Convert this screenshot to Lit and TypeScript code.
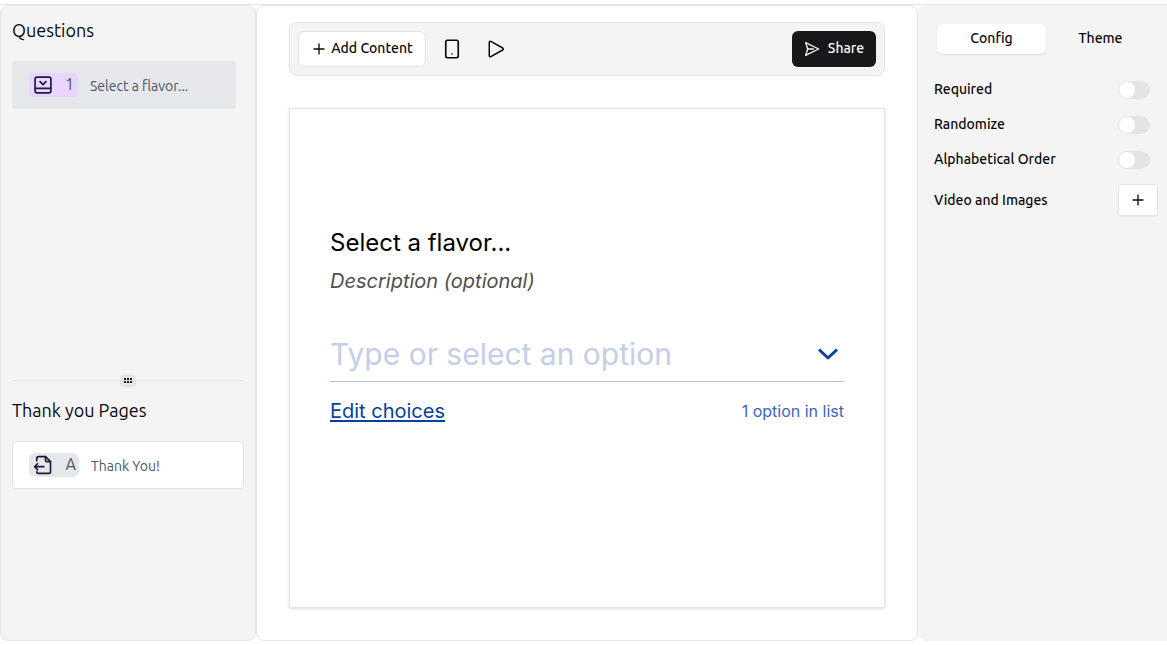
import { LitElement, html, css, svg } from "lit";
import { customElement, state } from "lit/decorators.js";

const icon = (size: number, body: unknown, width = 2) => html`<svg
  width=${size}
  height=${size}
  viewBox="0 0 24 24"
  fill="none"
  stroke="currentColor"
  stroke-width=${width}
  stroke-linecap="round"
  stroke-linejoin="round"
  aria-hidden="true"
>
  ${body}
</svg>`;

const plus = svg`<path d="M4.5 12h15M12 4.5v15" />`;
const phone = svg`<rect x="4.500" y="1.500" width="15" height="21" rx="2" /><path d="M12 18h.01" />`;
const play = svg`<path d="M3 3.200v17.600c0 1.200 1 1.900 2.100 1.300L21 13.300c1-.6 1-2 0-2.600L5.100 1.900C4 1.300 3 2 3 3.200z" />`;
const send = svg`<path d="M2.500 2.500 22 12 2.500 21.500 5.500 12z" /><path d="M5.500 12H14" />`;
const dropdown = svg`<rect x="2.500" y="2.500" width="19" height="19" rx="2.500" /><path d="M2.500 16h19M8.500 8l3.500 3.500L15.500 8" />`;
const exit = svg`<path d="M4.500 7V4a2 2 0 0 1 2-2H15l6 6v12a2 2 0 0 1-2 2H6.500a2 2 0 0 1-2-2" /><path d="M15 2v4.500A1.500 1.500 0 0 0 16.500 8H21" /><path d="M13 14H2M5.500 10.500 2 14l3.500 3.500" />`;

@customElement("app-root")
export class AppRoot extends LitElement {
  static styles = css`
    :host {
      display: flex;
      box-sizing: border-box;
      min-height: 100vh;
      padding: 4px 0;
      background: #fff;
      color: #09090b;
      font-family: Ubuntu, "Noto Sans", sans-serif;
      font-size: 14px;
      line-height: 20px;
    }
    * {
      box-sizing: border-box;
    }
    h1, h2, p {
      margin: 0;
      font-weight: 400;
    }
    button {
      border: 0;
      padding: 0;
      background: none;
      color: inherit;
      font: inherit;
      cursor: pointer;
    }
    svg {
      display: block;
      flex: none;
    }
    .shell {
      flex: 1;
      display: grid;
      grid-template-columns: 256px minmax(0, 1fr) 249px;
      border-top: 1px solid #e4e4e7;
    }
    .pane {
      border: 1px solid #e4e4e4;
      border-radius: 8px;
      min-width: 0;
    }
    .sidebar {
      display: flex;
      flex-direction: column;
      background: #f4f4f4;
      padding: 0 11px;
    }
    .questions {
      flex: 119;
      padding: 10px 8px 0 0;
    }
    .endings {
      flex: 81;
      padding-top: 9px;
    }
    .heading {
      margin-bottom: 17px;
      font-size: 18px;
      line-height: 28px;
      white-space: nowrap;
    }
    .item {
      display: flex;
      align-items: center;
      gap: 12px;
      width: 100%;
      height: 48px;
      padding: 0 16px;
      border: 1px solid transparent;
      border-radius: 4px;
      color: #4b5563;
      background: #e5e7eb;
      text-align: left;
    }
    .item.plain {
      background: #fff;
      border-color: #e4e4e7;
    }
    .name {
      padding-top: 2px;
    }
    .badge {
      display: flex;
      align-items: center;
      justify-content: space-between;
      width: 49px;
      height: 24px;
      padding: 0 4px;
      border-radius: 4px;
      font-size: 16px;
      background: #e9d5ff;
    }
    .badge span {
      padding-bottom: 2px;
    }
    .badge svg {
      color: #1e1b3a;
    }
    .plain .badge {
      width: 50px;
      padding-right: 3px;
      border-radius: 6px;
      background: #e5e7eb;
    }
    .divider {
      display: flex;
      align-items: center;
      height: 12px;
    }
    .divider::before,
    .divider::after {
      content: "";
      flex: 1;
      height: 1px;
      background: #e4e4e4;
    }
    .grip {
      display: grid;
      place-items: center;
      width: 16px;
      height: 12px;
      background: #e4e4e4;
      border-radius: 2px;
    }
    .editor {
      display: flex;
      flex-direction: column;
      gap: 32px;
      padding: 16px 32px 32px;
      background: #fff;
    }
    .toolbar {
      display: flex;
      align-items: center;
      height: 54px;
      padding: 0 8px;
      gap: 16px;
      border: 1px solid #e4e4e4;
      border-radius: 8px;
      background: #f4f4f4;
      font-weight: 500;
    }
    .add,
    .share {
      display: flex;
      align-items: center;
      justify-content: center;
      height: 36px;
      border-radius: 6px;
      white-space: nowrap;
    }
    .add span,
    .share span {
      padding-bottom: 2px;
    }
    .add {
      width: 128px;
      gap: 4px;
      background: #fff;
      border: 1px solid #e4e4e7;
    }
    .tools {
      display: flex;
      gap: 24px;
    }
    .tool {
      display: grid;
      place-items: center;
      width: 20px;
      height: 36px;
    }
    .share {
      width: 84px;
      gap: 8px;
      margin-left: auto;
      background: #18181b;
      color: #fafafa;
    }
    .canvas {
      flex: 1;
      padding: 116px 40px 40px;
      border: 1px solid #e4e4e7;
      box-shadow: 0 1px 3px rgba(0, 0, 0, 0.14);
      font-family: Inter, sans-serif;
    }
    .title {
      font-size: 24px;
      line-height: 36px;
      color: #000;
    }
    .description {
      margin-top: 6px;
      font-size: 20px;
      line-height: 28px;
      font-style: italic;
      color: #505050;
    }
    .field {
      display: flex;
      align-items: center;
      height: 55px;
      margin-top: 32px;
      padding-right: 4px;
      border-bottom: 1px solid #afc0dc;
    }
    .field svg {
      color: #04429c;
    }
    .field input {
      flex: 1;
      min-width: 0;
      height: 44px;
      padding: 0;
      border: 0;
      outline: 0;
      background: none;
      font: 30px/40px Inter, sans-serif;
      color: #0445af;
    }
    .field input::placeholder {
      color: #c3cee8;
      opacity: 1;
    }
    .below {
      display: flex;
      align-items: center;
      justify-content: space-between;
      margin-top: 13px;
      line-height: 32px;
      font-size: 16px;
      color: #3b66bd;
    }
    .below a {
      font-size: 20px;
      color: #04429c;
      text-decoration-thickness: 2px;
      text-underline-offset: 2px;
    }
    .settings {
      padding: 13px 9px 16px 16px;
      border: 0;
      border-radius: 8px 0 0 8px;
      background: #f4f4f4;
      font-weight: 500;
    }
    .tabs {
      display: grid;
      grid-template-columns: 1fr 1fr;
      height: 40px;
      padding: 6px 3px;
      margin-bottom: 21px;
    }
    .tab {
      height: 30px;
      padding-bottom: 2px;
      border-radius: 6px;
    }
    .tab.on {
      background: #fff;
      box-shadow: 0 1px 2px rgba(0, 0, 0, 0.1);
    }
    .row {
      display: flex;
      align-items: center;
      justify-content: space-between;
      margin-bottom: 14px;
    }
    .row label,
    .row span {
      padding-bottom: 1px;
    }
    .switch {
      appearance: none;
      width: 32px;
      height: 18px;
      margin: 0 8px 0 0;
      padding: 1px;
      border-radius: 9px;
      background: #e4e4e7;
      cursor: pointer;
    }
    .switch::before {
      content: "";
      display: block;
      width: 16px;
      height: 16px;
      border-radius: 50%;
      background: #fff;
    }
    .switch:checked {
      background: #18181b;
    }
    .switch:checked::before {
      margin-left: auto;
    }
    .attach {
      display: grid;
      place-items: center;
      width: 40px;
      height: 32px;
      border: 1px solid #e4e4e7;
      border-radius: 4px;
      background: #fff;
      box-shadow: 0 1px 2px rgba(0, 0, 0, 0.05);
    }
  `;

  @state() private tab = "Config";

  render() {
    return html`
      <div class="shell">
        <aside class="pane sidebar">
          <section class="questions">
            <h2 class="heading">Questions</h2>
            <button class="item">
              <span class="badge">${icon(20, dropdown)}<span>1</span></span>
              <span class="name">Select a flavor...</span>
            </button>
          </section>
          <div class="divider" role="separator">
            <span class="grip">
              <svg width="8" height="5" viewBox="0 0 8 5" fill="#18181b">
                <path d="M0 0h2v2H0zM3 0h2v2H3zM6 0h2v2H6zM0 3h2v2H0zM3 3h2v2H3zM6 3h2v2H6z" />
              </svg>
            </span>
          </div>
          <section class="endings">
            <h2 class="heading">Thank you Pages</h2>
            <button class="item plain">
              <span class="badge">${icon(20, exit)}<span>A</span></span>
              <span class="name">Thank You!</span>
            </button>
          </section>
        </aside>

        <main class="pane editor">
          <div class="toolbar">
            <button class="add">${icon(16, plus)}<span>Add Content</span></button>
            <div class="tools">
              <button class="tool" aria-label="Mobile preview">${icon(20, phone)}</button>
              <button class="tool" aria-label="Play">${icon(18, play)}</button>
            </div>
            <button class="share">${icon(16, send)}<span>Share</span></button>
          </div>
          <section class="canvas">
            <h1 class="title">Select a flavor...</h1>
            <p class="description">Description (optional)</p>
            <div class="field">
              <input type="text" aria-label="Option" placeholder="Type or select an option" />
              <svg width="24" height="24" viewBox="0 0 24 24" fill="none" stroke="currentColor"
                stroke-width="3" stroke-linejoin="round" aria-hidden="true">
                <path d="M3 7.500l9 8.500 9-8.500" />
              </svg>
            </div>
            <div class="below">
              <a href="#choices">Edit choices</a>
              <span>1 option in list</span>
            </div>
          </section>
        </main>

        <aside class="pane settings">
          <div class="tabs" role="tablist">
            ${["Config", "Theme"].map(
              (name) => html`<button
                class="tab ${this.tab === name ? "on" : ""}"
                role="tab"
                aria-selected=${this.tab === name}
                @click=${() => (this.tab = name)}
              >${name}</button>`
            )}
          </div>
          ${["Required", "Randomize", "Alphabetical Order"].map(
            (name, i) => html`<div class="row">
              <label for="option-${i}">${name}</label>
              <input class="switch" type="checkbox" role="switch" id="option-${i}" />
            </div>`
          )}
          <div class="row">
            <span>Video and Images</span>
            <button class="attach" aria-label="Add video or image">${icon(16, plus)}</button>
          </div>
        </aside>
      </div>
    `;
  }
}
